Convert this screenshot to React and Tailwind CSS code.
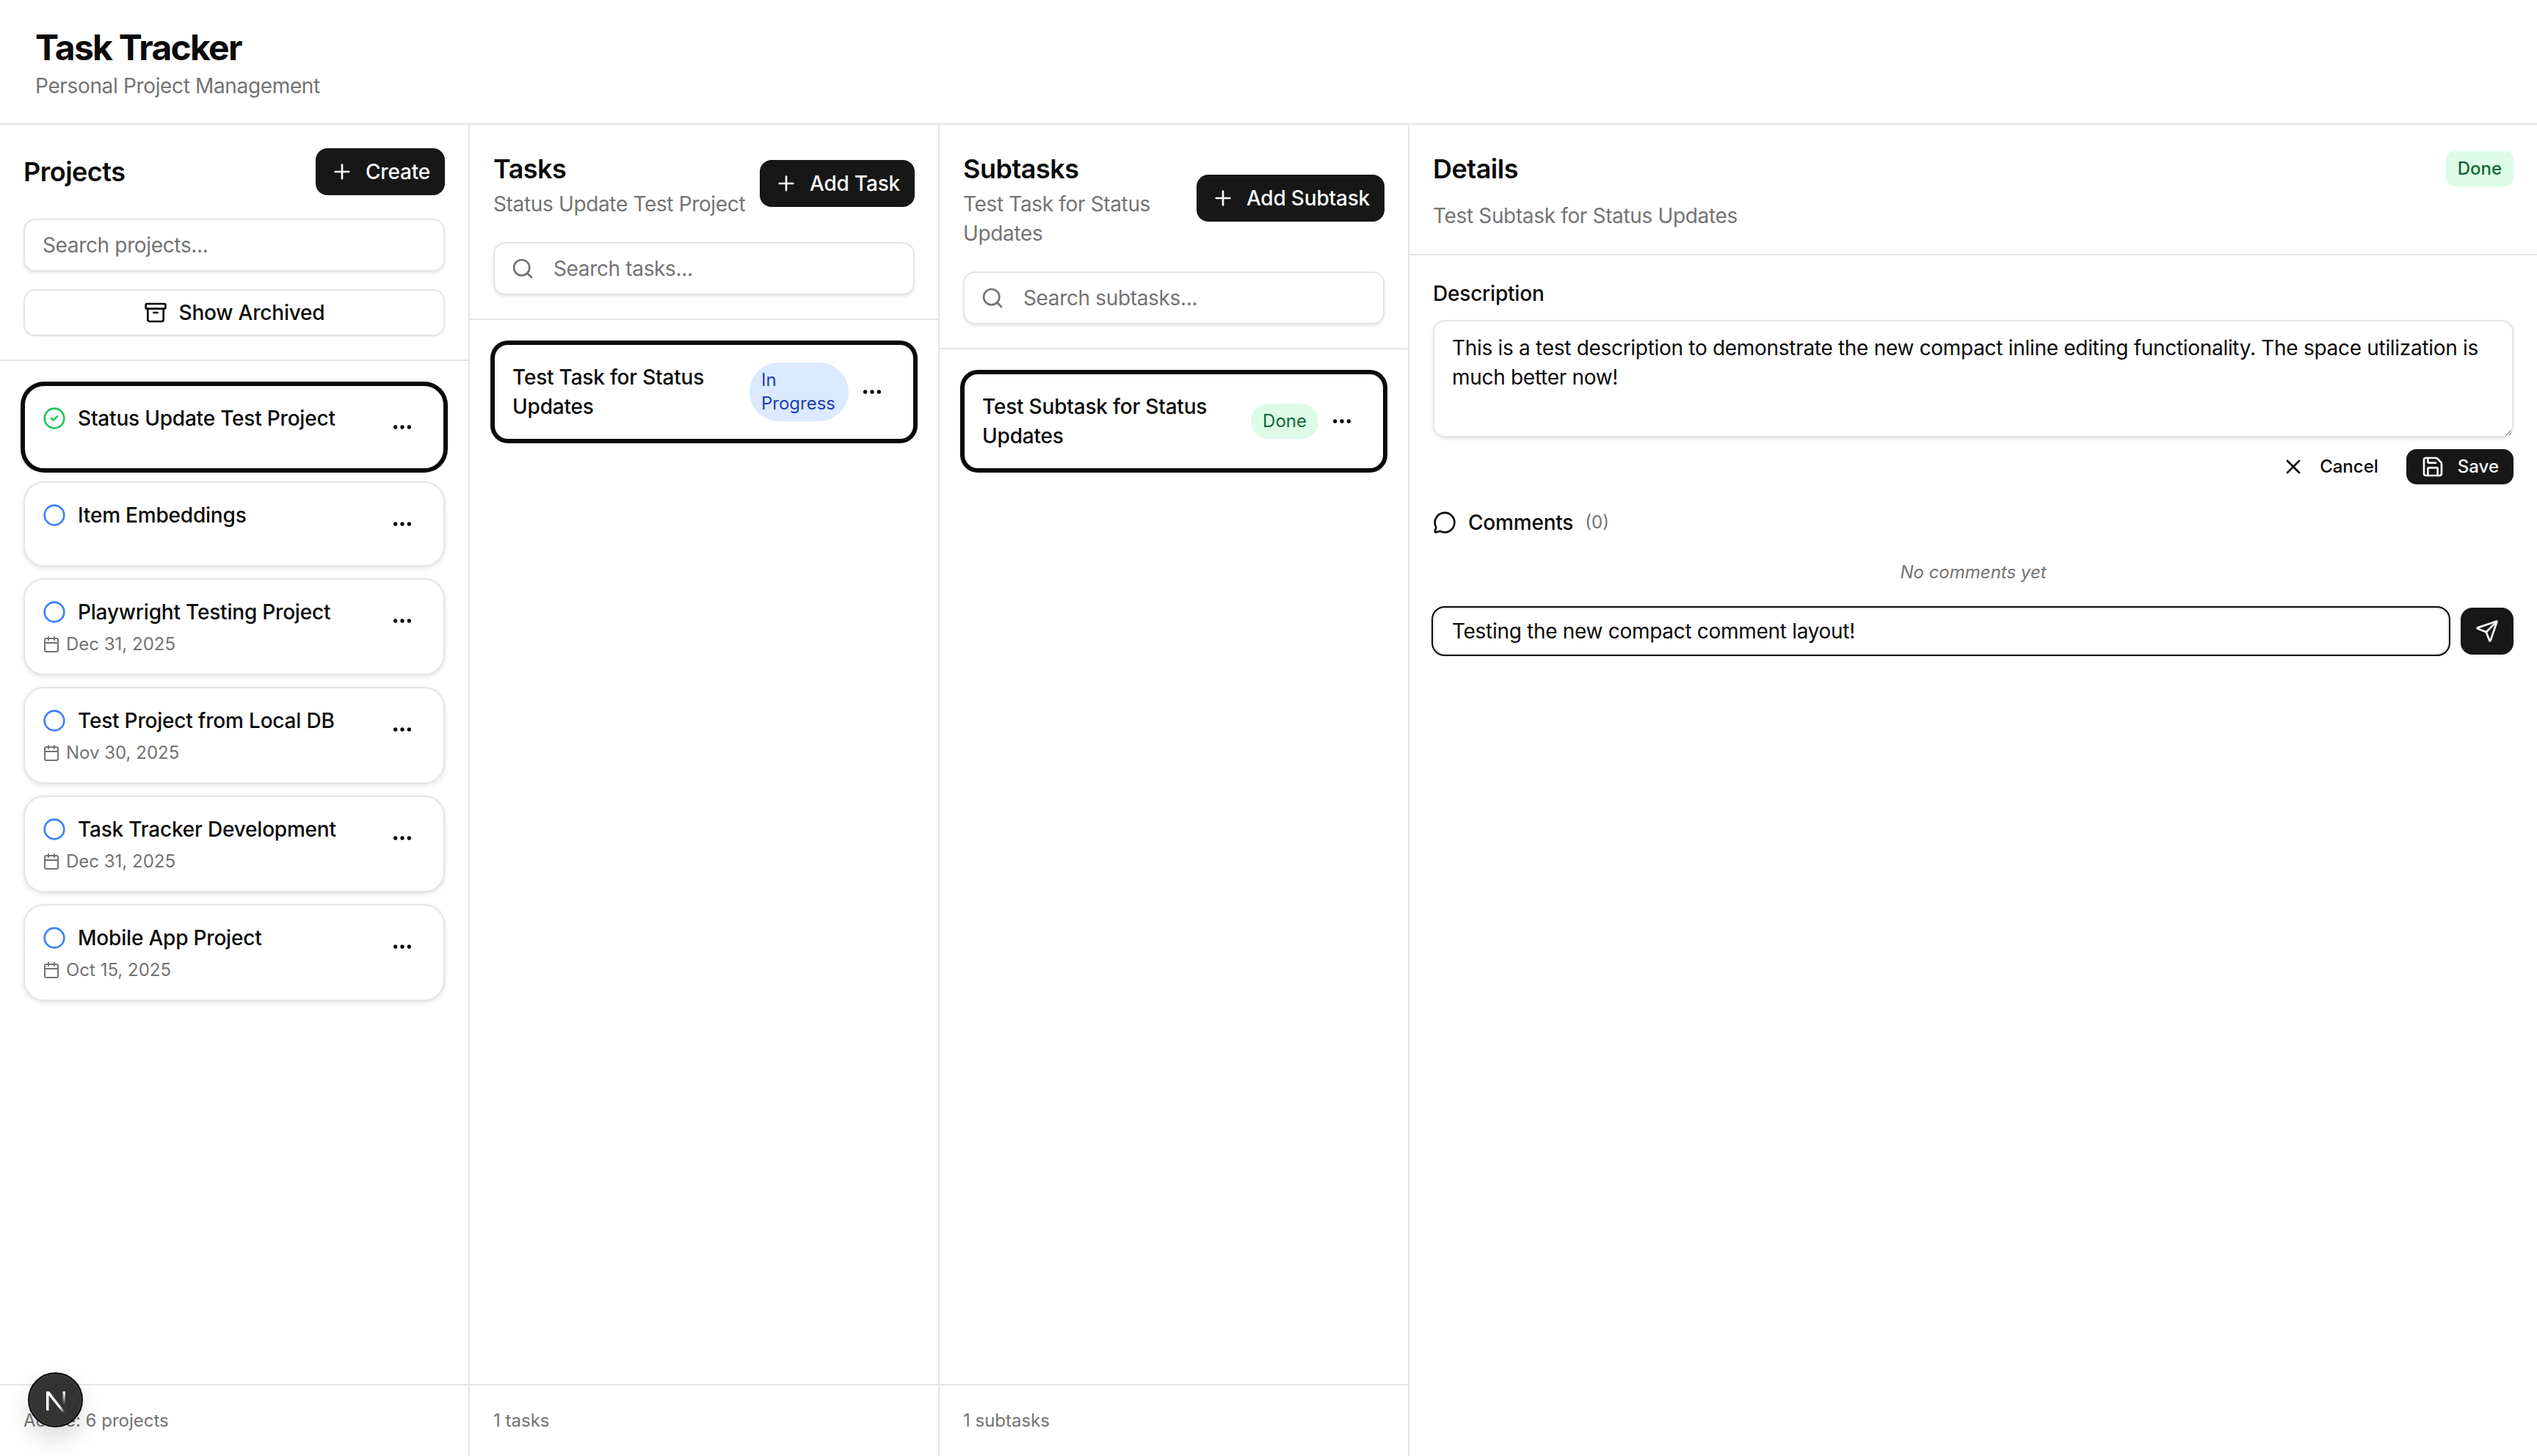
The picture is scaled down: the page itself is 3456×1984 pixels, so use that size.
import React from "react";
import {
  Plus,
  Archive,
  Search,
  CircleCheck,
  Circle,
  Calendar,
  Ellipsis,
  X,
  Save,
  MessageCircle,
  Send,
} from "lucide-react";

const projects = [
  { name: "Status Update Test Project", done: true, selected: true },
  { name: "Item Embeddings" },
  { name: "Playwright Testing Project", date: "Dec 31, 2025" },
  { name: "Test Project from Local DB", date: "Nov 30, 2025" },
  { name: "Task Tracker Development", date: "Dec 31, 2025" },
  { name: "Mobile App Project", date: "Oct 15, 2025" },
];

function PrimaryButton({ label }) {
  return (
    <button className="flex h-[64px] shrink-0 items-center gap-[16px] rounded-[16px] bg-[#171717] px-[20px] text-[28px] font-medium tracking-[-0.2px] text-[#fafafa]">
      <Plus size={32} />
      {label}
    </button>
  );
}

function SearchBox({ placeholder }) {
  return (
    <div className="flex h-[72px] items-center rounded-[16px] border-2 border-[#e5e5e5] bg-white pl-[22px] shadow-[0_2px_4px_rgba(0,0,0,0.1)]">
      <Search size={32} className="shrink-0 text-[#737373]" />
      <input
        readOnly
        placeholder={placeholder}
        className="ml-[26px] w-full bg-transparent text-[28px] tracking-[-0.35px] outline-none placeholder:text-[#737373]"
      />
    </div>
  );
}

function ColumnFooter({ text }) {
  return (
    <div className="flex h-[98px] shrink-0 items-center border-t-2 border-[#e5e5e5] px-[32px] text-[24px] text-[#737373]">
      {text}
    </div>
  );
}

function ProjectCard({ project }) {
  return (
    <div
      className={`flex justify-between rounded-[28px] border-2 bg-white p-[24px] ${
        project.selected
          ? "border-[#0a0a0a] ring-4 ring-[#0a0a0a]"
          : "border-[#e5e5e5] shadow-[0_2px_6px_rgba(0,0,0,0.12)]"
      }`}
    >
      <div className="flex flex-col gap-[8px]">
        <div className="flex h-[40px] items-center gap-[16px] text-[28px] font-medium tracking-[-0.2px] text-[#0a0a0a]">
          {project.done ? (
            <CircleCheck size={32} className="text-[#22c55e]" />
          ) : (
            <Circle size={32} className="text-[#3b82f6]" />
          )}
          {project.name}
        </div>
        {project.date && (
          <div className="flex h-[32px] items-center gap-[8px] text-[24px] text-[#737373]">
            <Calendar size={24} />
            {project.date}
          </div>
        )}
      </div>
      <button className="flex h-[64px] w-[64px] shrink-0 items-center justify-center text-[#0a0a0a]">
        <Ellipsis size={32} />
      </button>
    </div>
  );
}

function ItemCard({ title, badge }) {
  return (
    <div className="flex items-center rounded-[20px] border-2 border-[#0a0a0a] bg-white p-[24px] ring-4 ring-[#0a0a0a]">
      <div className="min-w-0 flex-1 pr-[16px] text-[28px] font-medium leading-[40px] tracking-[-0.2px] text-[#0a0a0a]">
        {title}
      </div>
      {badge}
      <button className="flex h-[64px] w-[64px] shrink-0 items-center justify-center text-[#0a0a0a]">
        <Ellipsis size={32} />
      </button>
    </div>
  );
}

function ListHeader({ title, subtitle, button, placeholder }) {
  return (
    <div className="flex flex-col gap-[32px] border-b-2 border-[#e5e5e5] p-[32px]">
      <div className="flex items-center justify-between gap-[16px]">
        <div className="min-w-0">
          <h2 className="text-[36px] font-semibold leading-[56px] tracking-[-0.5px] text-[#0a0a0a]">{title}</h2>
          <p className="text-[28px] leading-[40px] tracking-[-0.35px] text-[#737373]">{subtitle}</p>
        </div>
        <PrimaryButton label={button} />
      </div>
      <SearchBox placeholder={placeholder} />
    </div>
  );
}

export default function App() {
  return (
    <div className="relative flex h-screen flex-col overflow-hidden bg-white font-['Inter',sans-serif]">
      {/* Header */}
      <header className="h-[170px] shrink-0 border-b-2 border-[#e5e5e5] px-[48px] pt-[33px]">
        <h1 className="text-[48px] font-bold leading-[64px] tracking-[-1.75px] text-[#0a0a0a]">
          Task Tracker
        </h1>
        <p className="text-[28px] leading-[40px] tracking-[-0.35px] text-[#737373]">Personal Project Management</p>
      </header>

      <main className="flex min-h-0 flex-1">
        {/* Projects */}
        <section className="flex w-[640px] shrink-0 flex-col border-r-2 border-[#e5e5e5]">
          <div className="flex flex-col border-b-2 border-[#e5e5e5] p-[32px]">
            <div className="flex items-center justify-between">
              <h2 className="text-[36px] font-semibold tracking-[-0.5px] text-[#0a0a0a]">Projects</h2>
              <PrimaryButton label="Create" />
            </div>
            <div className="mt-[32px] flex h-[72px] items-center rounded-[16px] border-2 border-[#e5e5e5] bg-white px-[24px] shadow-[0_2px_4px_rgba(0,0,0,0.1)]">
              <input
                readOnly
                placeholder="Search projects..."
                className="w-full bg-transparent text-[28px] tracking-[-0.35px] outline-none placeholder:text-[#737373]"
              />
            </div>
            <button className="mt-[24px] flex h-[64px] items-center justify-center gap-[16px] rounded-[16px] border-2 border-[#e5e5e5] bg-white text-[28px] font-medium tracking-[-0.2px] text-[#0a0a0a] shadow-[0_1px_3px_rgba(0,0,0,0.08)]">
              <Archive size={32} />
              Show Archived
            </button>
          </div>
          <div className="flex flex-1 flex-col gap-[16px] px-[32px] pt-[32px]">
            {projects.map((p) => (
              <ProjectCard key={p.name} project={p} />
            ))}
          </div>
          <ColumnFooter text="Active: 6 projects" />
        </section>

        {/* Tasks */}
        <section className="flex w-[640px] shrink-0 flex-col border-r-2 border-[#e5e5e5]">
          <ListHeader
            title="Tasks"
            subtitle="Status Update Test Project"
            button="Add Task"
            placeholder="Search tasks..."
          />
          <div className="flex-1 px-[32px] pt-[32px]">
            <ItemCard
              title="Test Task for Status Updates"
              badge={
                <span className="w-[135px] shrink-0 rounded-full bg-[#dbeafe] px-[16px] py-[8px] text-[24px] leading-[32px] text-[#1e40af]">
                  In Progress
                </span>
              }
            />
          </div>
          <ColumnFooter text="1 tasks" />
        </section>

        {/* Subtasks */}
        <section className="flex w-[640px] shrink-0 flex-col border-r-2 border-[#e5e5e5]">
          <ListHeader
            title="Subtasks"
            subtitle="Test Task for Status Updates"
            button="Add Subtask"
            placeholder="Search subtasks..."
          />
          <div className="flex-1 px-[32px] pt-[32px]">
            <ItemCard
              title="Test Subtask for Status Updates"
              badge={
                <span className="shrink-0 rounded-full bg-[#dcfce7] px-[16px] py-[8px] text-[24px] leading-[32px] text-[#166534]">
                  Done
                </span>
              }
            />
          </div>
          <ColumnFooter text="1 subtasks" />
        </section>

        {/* Details */}
        <section className="flex min-w-0 flex-1 flex-col">
          <div className="flex flex-col gap-[16px] border-b-2 border-[#e5e5e5] p-[32px]">
            <div className="flex items-center justify-between">
              <h2 className="text-[36px] font-semibold leading-[56px] tracking-[-0.5px] text-[#0a0a0a]">Details</h2>
              <span className="flex h-[48px] items-center rounded-[12px] bg-[#dcfce7] px-[16px] text-[24px] font-medium text-[#166534]">
                Done
              </span>
            </div>
            <p className="text-[28px] leading-[40px] tracking-[-0.35px] text-[#737373]">
              Test Subtask for Status Updates
            </p>
          </div>
          <div className="flex flex-col px-[32px] pt-[32px]">
            <label className="mb-[16px] text-[28px] font-medium leading-[40px] tracking-[-0.2px] text-[#0a0a0a]">
              Description
            </label>
            <textarea
              readOnly
              defaultValue="This is a test description to demonstrate the new compact inline editing functionality. The space utilization is much better now!"
              className="h-[160px] resize-y rounded-[16px] border-2 border-[#e5e5e5] px-[24px] py-[16px] text-[28px] leading-[40px] tracking-[-0.3px] text-[#0a0a0a] shadow-[0_2px_4px_rgba(0,0,0,0.1)] outline-none"
            />
            <div className="mt-[16px] flex justify-end gap-[18px]">
              <button className="flex h-[48px] items-center gap-[20px] px-[20px] text-[24px] font-medium text-[#0a0a0a]">
                <X size={32} />
                Cancel
              </button>
              <button className="flex h-[48px] items-center gap-[18px] rounded-[14px] bg-[#171717] px-[20px] text-[24px] font-medium text-[#fafafa]">
                <Save size={32} />
                Save
              </button>
            </div>
            <div className="mt-[32px] flex h-[40px] items-center">
              <MessageCircle size={32} className="text-[#0a0a0a]" />
              <span className="ml-[16px] text-[28px] font-medium tracking-[-0.2px] text-[#0a0a0a]">Comments</span>
              <span className="ml-[16px] text-[24px] text-[#737373]">(0)</span>
            </div>
            <p className="mt-[32px] text-center text-[24px] italic leading-[32px] text-[#737373]">
              No comments yet
            </p>
            <div className="mt-[32px] flex items-center gap-[16px]">
              <input
                readOnly
                value="Testing the new compact comment layout!"
                className="h-[64px] min-w-0 flex-1 rounded-[16px] border-2 border-[#e5e5e5] px-[24px] text-[28px] tracking-[-0.3px] text-[#0a0a0a] shadow-[0_2px_4px_rgba(0,0,0,0.1)] outline-2 outline-[#0a0a0a]"
              />
              <button className="flex h-[64px] w-[72px] shrink-0 items-center justify-center rounded-[16px] bg-[#171717] text-[#fafafa]">
                <Send size={32} />
              </button>
            </div>
          </div>
        </section>
      </main>

      {/* Dev badge */}
      <div className="absolute left-[38px] top-[1870px] flex h-[75px] w-[75px] items-center justify-center rounded-full border-2 border-[#0a0a0a] bg-[#333333] shadow-[inset_0_0_0_1px_rgba(255,255,255,0.12),0_16px_32px_rgba(0,0,0,0.14)]">
        <svg width="30" height="30" viewBox="0 0 30 30" fill="none" className="mt-[4px]">
          <defs>
            <linearGradient id="n-fade" x1="10" y1="8" x2="28" y2="30" gradientUnits="userSpaceOnUse">
              <stop offset="0.6" stopColor="#fff" />
              <stop offset="1" stopColor="#fff" stopOpacity="0" />
            </linearGradient>
            <linearGradient id="n-bar" x1="26" y1="1" x2="26" y2="20" gradientUnits="userSpaceOnUse">
              <stop stopColor="#fff" />
              <stop offset="1" stopColor="#fff" stopOpacity="0" />
            </linearGradient>
          </defs>
          <path d="M2 1H6L28 29.5H24L5.5 6.5V27H2Z" fill="url(#n-fade)" />
          <rect x="24.5" y="1" width="3.5" height="19" fill="url(#n-bar)" />
        </svg>
      </div>
    </div>
  );
}
